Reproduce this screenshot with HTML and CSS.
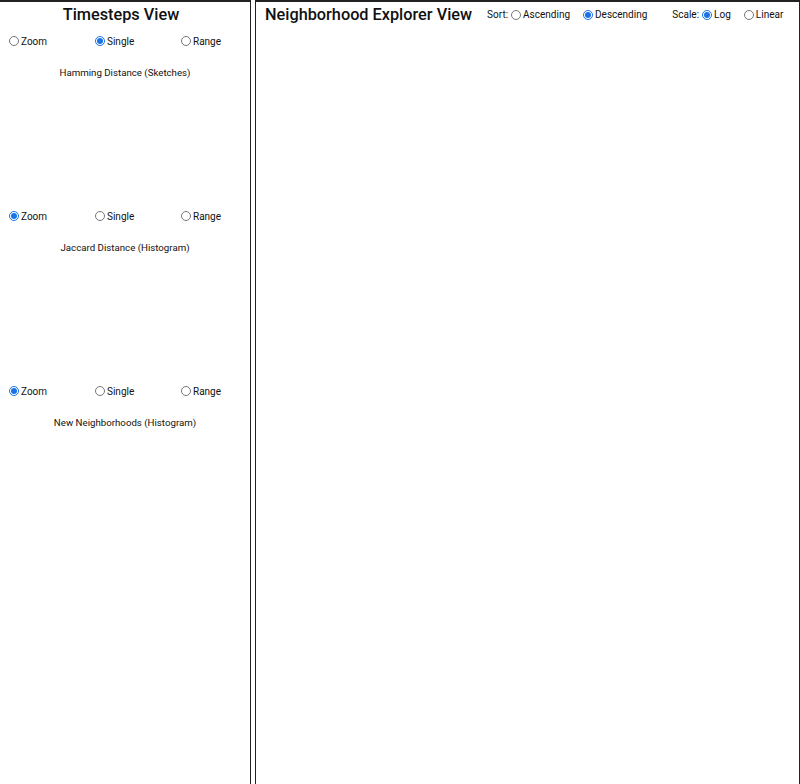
FILE: index.html
```html
<!DOCTYPE html>
<html>
<head>
<meta charset="utf-8">
<link rel="stylesheet" href="styles.css">
</head>
<body>
<div class="app">
  <div class="panel left">
    <h1 class="title title-left">Timesteps View</h1>
    <div class="section">
      <div class="modes">
        <label class="opt"><input type="radio" name="m1">Zoom</label>
        <label class="opt"><input type="radio" name="m1" checked>Single</label>
        <label class="opt"><input type="radio" name="m1">Range</label>
      </div>
      <div class="chart-title">Hamming Distance (Sketches)</div>
    </div>
    <div class="section">
      <div class="modes">
        <label class="opt"><input type="radio" name="m2" checked>Zoom</label>
        <label class="opt"><input type="radio" name="m2">Single</label>
        <label class="opt"><input type="radio" name="m2">Range</label>
      </div>
      <div class="chart-title">Jaccard Distance (Histogram)</div>
    </div>
    <div class="section">
      <div class="modes">
        <label class="opt"><input type="radio" name="m3" checked>Zoom</label>
        <label class="opt"><input type="radio" name="m3">Single</label>
        <label class="opt"><input type="radio" name="m3">Range</label>
      </div>
      <div class="chart-title">New Neighborhoods (Histogram)</div>
    </div>
  </div>
  <div class="panel right">
    <div class="header">
      <h1 class="title title-right">Neighborhood Explorer View</h1>
      <div class="group sort">
        <span class="lbl">Sort:</span>
        <label class="opt"><input type="radio" name="s">Ascending</label>
        <label class="opt gap"><input type="radio" name="s" checked>Descending</label>
      </div>
      <div class="group scale">
        <span class="lbl">Scale:</span>
        <label class="opt"><input type="radio" name="sc" checked>Log</label>
        <label class="opt gap"><input type="radio" name="sc">Linear</label>
      </div>
    </div>
  </div>
</div>
</body>
</html>
```

FILE: styles.css
```css
html, body {
  margin: 0;
  padding: 0;
  background: #fff;
  font-family: Roboto, "Liberation Sans", sans-serif;
  color: #111;
}
.app {
  display: flex;
  height: 784px;
  overflow: hidden;
}
.panel {
  box-sizing: border-box;
  border-top: 2px solid #222;
  height: 784px;
}
.left {
  width: 251px;
  border-right: 1px solid #222;
  flex: none;
}
.right {
  margin-left: 4px;
  flex: 1;
  border-left: 1px solid #222;
  border-right: 1px solid #222;
}
.title {
  margin: 0;
  font-size: 16.3px;
  font-weight: 500;
  line-height: 25px;
  text-align: center;
  color: #111;
  white-space: nowrap;
}
.title-left {
  padding-right: 8px;
}
.section {
  height: 175px;
  padding-top: 5px;
  box-sizing: border-box;
}
.modes {
  display: grid;
  grid-template-columns: repeat(3, 86px);
  padding-left: 9px;
  height: 18px;
  align-items: center;
}
.opt {
  display: inline-flex;
  align-items: center;
  font-size: 10px;
  color: #111;
  white-space: nowrap;
}
.opt input {
  width: 10px;
  height: 10px;
  margin: 0 2px 0 0;
  accent-color: #1a73e8;
}
.chart-title {
  text-align: center;
  font-size: 9.7px;
  margin-top: 17px;
}
.header {
  display: flex;
  align-items: center;
  padding-left: 9px;
  height: 25px;
}
.title-right {
  text-align: left;
  flex: none;
}
.group {
  display: flex;
  align-items: center;
  flex: none;
}
.sort {
  margin-left: 15px;
}
.scale {
  margin-left: 25px;
}
.lbl {
  font-size: 10px;
  margin-right: 3px;
}
.gap {
  margin-left: 13px;
}
```
